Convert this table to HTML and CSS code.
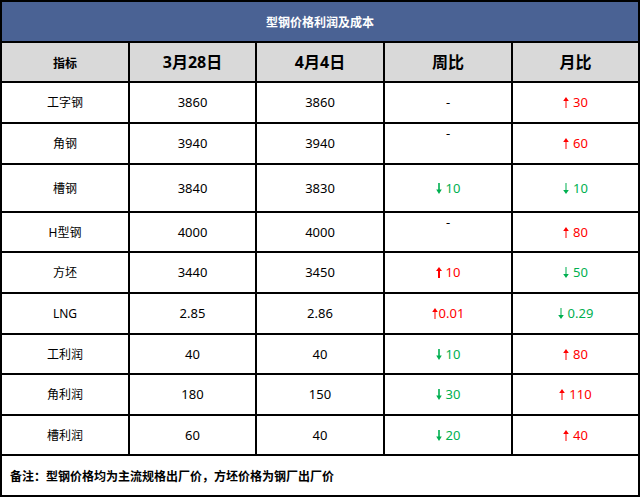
FILE: index.html
```html
<!DOCTYPE html>
<html lang="zh-CN">
<head>
<meta charset="utf-8">
<title>型钢价格利润及成本</title>
<link rel="stylesheet" href="styles.css">
</head>
<body>
<div class="sheet">
  <div class="cell title">型钢价格利润及成本</div>

  <div class="cell head small">指标</div>
  <div class="cell head">3月28日</div>
  <div class="cell head">4月4日</div>
  <div class="cell head">周比</div>
  <div class="cell head">月比</div>

  <div class="cell name">工字钢</div>
  <div class="cell">3860</div>
  <div class="cell">3860</div>
  <div class="cell">-</div>
  <div class="cell up"><svg class="arr" viewBox="0 0 6 11"><path d="M3 0 L0.2 4 L2.5 4 L2.5 11 L3.5 11 L3.5 4 L5.8 4 Z"/></svg>30</div>

  <div class="cell name">角钢</div>
  <div class="cell">3940</div>
  <div class="cell">3940</div>
  <div class="cell raised">-</div>
  <div class="cell up"><svg class="arr" viewBox="0 0 6 11"><path d="M3 0 L0.2 4 L2.5 4 L2.5 11 L3.5 11 L3.5 4 L5.8 4 Z"/></svg>60</div>

  <div class="cell name">槽钢</div>
  <div class="cell">3840</div>
  <div class="cell">3830</div>
  <div class="cell down"><svg class="arr" viewBox="0 0 6 11"><path d="M3 11 L0.2 6.5 L2.2 6.5 L2.2 0 L3.8 0 L3.8 6.5 L5.8 6.5 Z"/></svg>10</div>
  <div class="cell down"><svg class="arr" viewBox="0 0 6 11"><path d="M3 11 L0.2 7 L2.5 7 L2.5 0 L3.5 0 L3.5 7 L5.8 7 Z"/></svg>10</div>

  <div class="cell name">H型钢</div>
  <div class="cell">4000</div>
  <div class="cell">4000</div>
  <div class="cell raised">-</div>
  <div class="cell up"><svg class="arr" viewBox="0 0 6 11"><path d="M3 0 L0.2 4 L2.5 4 L2.5 11 L3.5 11 L3.5 4 L5.8 4 Z"/></svg>80</div>

  <div class="cell name">方坯</div>
  <div class="cell">3440</div>
  <div class="cell">3450</div>
  <div class="cell up"><svg class="arr" viewBox="0 0 6 11"><path d="M3 0 L0 4 L2 4 L2 11 L4 11 L4 4 L6 4 Z"/></svg>10</div>
  <div class="cell down"><svg class="arr" viewBox="0 0 6 11"><path d="M3 11 L0.2 7 L2.5 7 L2.5 0 L3.5 0 L3.5 7 L5.8 7 Z"/></svg>50</div>

  <div class="cell name">LNG</div>
  <div class="cell">2.85</div>
  <div class="cell">2.86</div>
  <div class="cell up"><svg class="arr tight" viewBox="0 0 6 11"><path d="M3 0 L0.2 4 L2.5 4 L2.5 11 L3.5 11 L3.5 4 L5.8 4 Z"/></svg>0.01</div>
  <div class="cell down"><svg class="arr" viewBox="0 0 6 11"><path d="M3 11 L0.2 7 L2.5 7 L2.5 0 L3.5 0 L3.5 7 L5.8 7 Z"/></svg>0.29</div>

  <div class="cell name">工利润</div>
  <div class="cell">40</div>
  <div class="cell">40</div>
  <div class="cell down"><svg class="arr" viewBox="0 0 6 11"><path d="M3 11 L0.2 6.5 L2.2 6.5 L2.2 0 L3.8 0 L3.8 6.5 L5.8 6.5 Z"/></svg>10</div>
  <div class="cell up"><svg class="arr" viewBox="0 0 6 11"><path d="M3 0 L0.2 4 L2.5 4 L2.5 11 L3.5 11 L3.5 4 L5.8 4 Z"/></svg>80</div>

  <div class="cell name">角利润</div>
  <div class="cell">180</div>
  <div class="cell">150</div>
  <div class="cell down"><svg class="arr" viewBox="0 0 6 11"><path d="M3 11 L0.2 6.5 L2.2 6.5 L2.2 0 L3.8 0 L3.8 6.5 L5.8 6.5 Z"/></svg>30</div>
  <div class="cell up"><svg class="arr" viewBox="0 0 6 11"><path d="M3 0 L0.2 4 L2.5 4 L2.5 11 L3.5 11 L3.5 4 L5.8 4 Z"/></svg>110</div>

  <div class="cell name">槽利润</div>
  <div class="cell">60</div>
  <div class="cell">40</div>
  <div class="cell down"><svg class="arr" viewBox="0 0 6 11"><path d="M3 11 L0.2 6.5 L2.2 6.5 L2.2 0 L3.8 0 L3.8 6.5 L5.8 6.5 Z"/></svg>20</div>
  <div class="cell up"><svg class="arr" viewBox="0 0 6 11"><path d="M3 0 L0.2 4 L2.5 4 L2.5 11 L3.5 11 L3.5 4 L5.8 4 Z"/></svg>40</div>

  <div class="cell note">备注：型钢价格均为主流规格出厂价，方坯价格为钢厂出厂价</div>
</div>
</body>
</html>
```

FILE: styles.css
```css
html, body {
  margin: 0;
  padding: 0;
  background: #ffffff;
}

body {
  font-family: "Noto Sans", "Noto Sans CJK SC", sans-serif;
  color: #000000;
}

.sheet {
  width: 636px;
  display: grid;
  grid-template-columns: 126px 125px 126px 126px 125px;
  grid-template-rows: 39px 38px 39px 39px 46px 38px 39px 39px 38px 39px 38px 39px;
  gap: 2px;
  padding: 2px;
  background: #000000;
}

.cell {
  background: #ffffff;
  display: flex;
  align-items: center;
  justify-content: center;
  font-size: 13px;
  line-height: 17px;
  white-space: nowrap;
}

.title {
  grid-column: 1 / -1;
  background: #4a6294;
  color: #ffffff;
  font-size: 12px;
  font-weight: bold;
  font-family: "Noto Sans CJK SC", sans-serif;
}

.head {
  background: #d9d9d9;
  font-size: 16px;
  font-weight: bold;
}

.head.small {
  font-size: 12px;
  font-family: "Noto Sans CJK SC", sans-serif;
}

.name {
  font-size: 12px;
}

.raised {
  align-items: flex-start;
  padding-top: 1px;
}

.up {
  color: #ff0000;
}

.down {
  color: #00b050;
}

.arr {
  width: 6px;
  height: 11px;
  margin-right: 4px;
  fill: currentColor;
}

.arr.tight {
  margin-right: 1px;
}

.note {
  grid-column: 1 / -1;
  justify-content: flex-start;
  padding-left: 8px;
  font-size: 12px;
  font-weight: bold;
  font-family: "Noto Sans CJK SC", sans-serif;
}
```
